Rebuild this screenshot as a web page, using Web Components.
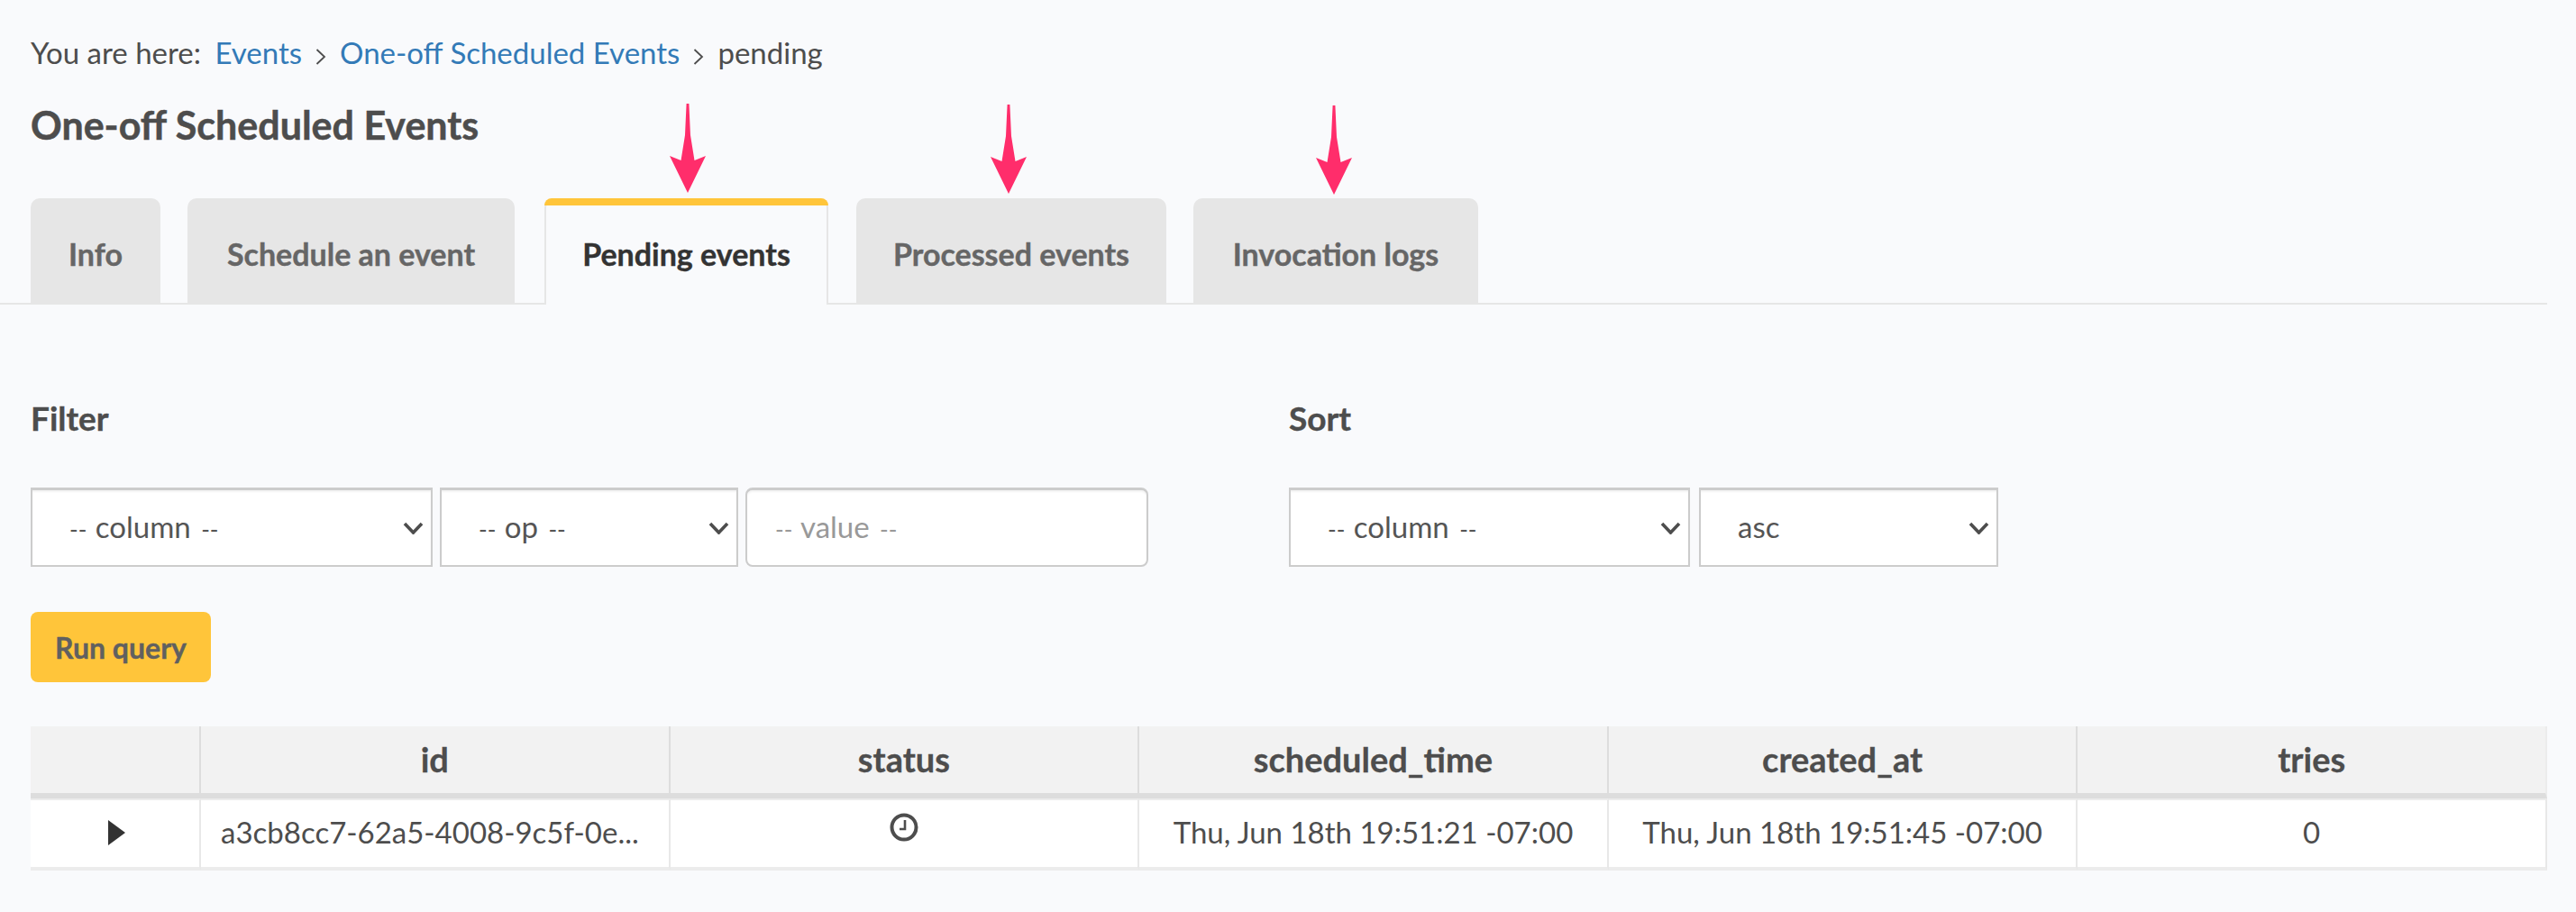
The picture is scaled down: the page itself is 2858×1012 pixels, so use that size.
<!DOCTYPE html>
<html><head><meta charset="utf-8"><title>One-off Scheduled Events</title>
<style>
html,body{margin:0;padding:0;background:#f9fafc;}
body{font-family:"Lato","Noto Sans",sans-serif;color:#4d4d4d;width:2858px;height:1012px;overflow:hidden;}
</style></head><body>
<x-page>
  <x-breadcrumb></x-breadcrumb>
  <x-title>One-off Scheduled Events</x-title>
  <x-tabs>
    <x-tab style="width:144px">Info</x-tab>
    <x-tab style="width:363px">Schedule an event</x-tab>
    <x-tab active arrow style="width:315px;margin-left:3px;--ax:1px">Pending events</x-tab>
    <x-tab arrow style="width:344px;margin-left:1px;--ax:-3px;--ay:1px">Processed events</x-tab>
    <x-tab arrow style="width:316px;--ax:-2px;--ay:2px">Invocation logs</x-tab>
  </x-tabs>
  <x-query></x-query>
  <x-table></x-table>
</x-page>
<script>
function def(name, html, init){
  customElements.define(name, class extends HTMLElement{
    constructor(){super();this.attachShadow({mode:'open'}).innerHTML=html;}
    connectedCallback(){ if(init) init(this); }
  });
}
const CH='<svg width="23" height="14" viewBox="0 0 23 14"><path d="M2 2 L11.5 12 L21 2" fill="none" stroke="#4d4d4d" stroke-width="3.6"/></svg>';
const SEP='<svg class="s" width="12" height="18" viewBox="0 0 12 18"><path d="M1.5 1 L10 9 L1.5 17" fill="none" stroke="#4d4d4d" stroke-width="1.8"/></svg>';
def('x-page',`<style>:host{display:block;padding-top:43px}</style><slot></slot>`);
def('x-breadcrumb',`<style>:host{display:block;margin-left:34px;font-size:33px;line-height:30px;height:30px;color:#4d4d4d;white-space:nowrap}
 a{color:#337ab7;text-decoration:none}
 a.f{margin-left:7px}
 .s{margin:0 15px;vertical-align:-1px}</style>You are here: <a class="f" href="#">Events</a>${SEP}<a href="#">One-off Scheduled Events</a>${SEP}pending`);
def('x-title',`<style>:host{display:block;margin:45px 0 0 34px;font-size:43px;font-weight:700;-webkit-text-stroke:.5px #4d4d4d;line-height:42px;height:30px;color:#4d4d4d;white-space:nowrap}</style><slot></slot>`);
def('x-tabs',`<style>:host{display:flex;gap:30px;margin-top:72px;padding-left:34px;width:2826px;border-bottom:2px solid #e6e6e6;box-sizing:border-box;height:118px}</style><slot></slot>`);
def('x-tab',`<style>:host{display:block;position:relative;height:116px;box-sizing:border-box;background:#e6e6e6;border-radius:10px 10px 0 0;color:#666;font-size:34px;font-weight:700;-webkit-text-stroke:.4px currentColor;line-height:124px;text-align:center;white-space:nowrap}
 :host([active]){background:#f9fafc;color:#333;height:118px;border:solid #e6e6e6;border-width:0 2px;}
 .bar{display:none;position:absolute;left:-2px;right:-2px;top:0;height:8px;background:#ffc53a;border-radius:10px 10px 0 0}
 :host([active]) .bar{display:block}
 svg{display:none;position:absolute;left:50%;top:calc(-105px + var(--ay,0px));margin-left:calc(-21px + var(--ax,0px))}
 :host([arrow]) svg{display:block}</style>
 <span class="bar"></span><slot></slot>
 <svg width="42" height="100" viewBox="0 0 42 100"><path d="M19.6 0 H22.4 L24 35 L28.5 63 L41 58 L21 99 L1 58 L13.5 63 L18 35 Z" fill="#ff2d6b"/></svg>`);
def('x-control',`<style>:host{display:flex;align-items:center;box-sizing:border-box;height:88px;border:2px solid #ccc;border-top-width:3px;background:#fff;padding:0 8px 3px 41px;font-size:33px;color:#555;white-space:nowrap;box-shadow:inset 0 2px 2px rgba(0,0,0,.05)}
 :host([input]){border-radius:8px;color:#999;padding-left:31px}
 .t{flex:1}
 #c{display:flex;margin-top:3px}</style><span class="t"><slot></slot></span><span id="c"></span>`,
 el=>{ if(!el.hasAttribute('input')) el.shadowRoot.getElementById('c').innerHTML=CH; });
def('x-button',`<style>:host{display:inline-flex;align-items:center;justify-content:center;box-sizing:border-box;width:200px;height:78px;background:#ffc53a;border-radius:8px;color:#606060;font-size:32px;font-weight:700;-webkit-text-stroke:.4px #606060}</style><slot></slot>`);
def('x-query',`<style>:host{display:block;padding-top:113px}
 .g{display:flex;padding-left:34px}
 .f{width:1396px}
 h4{margin:0;font-size:37px;line-height:26px;height:30px;color:#4d4d4d;font-weight:700;-webkit-text-stroke:.4px #4d4d4d}
 .r{display:flex;gap:8px;margin-top:60px}
 x-button{margin:50px 0 0 34px}
 .a,.b{font-size:26px}
 .a{margin-right:1px}.b{margin-left:3px}
</style>
<div class="g"><div class="f"><h4>Filter</h4><div class="r">
<x-control style="width:446px"><span class="a">--</span> column <span class="b">--</span></x-control><x-control style="width:331px"><span class="a">--</span> op <span class="b">--</span></x-control><x-control input style="width:447px"><span class="a">--</span> value <span class="b">--</span></x-control></div></div>
<div class="s"><h4>Sort</h4><div class="r" style="gap:10px"><x-control style="width:445px"><span class="a">--</span> column <span class="b">--</span></x-control><x-control style="width:332px">asc</x-control></div></div></div>
<x-button>Run query</x-button>`);
def('x-table',`<style>:host{display:grid;grid-template-columns:189px repeat(5,1fr);margin:49px 0 0 34px;width:2792px;font-size:33px;color:#4d4d4d}
 .h{height:72px;background:#f2f2f2;border-right:2px solid #ddd;border-bottom:6px solid #ddd;padding-bottom:2px;display:flex;align-items:center;justify-content:center;font-weight:700;font-size:38px;-webkit-text-stroke:.3px #4d4d4d}
 .h.e{border-right-color:#ececec}
 .d{box-sizing:border-box;height:80px;padding-bottom:5px;background:#fff;border-top:2px solid #ececec;border-right:2px solid #e8e8e8;border-bottom:4px solid #ececec;display:flex;align-items:center;justify-content:center;white-space:nowrap}
 .d.l{justify-content:flex-start;padding-left:22px}
</style>
<div class="h"></div><div class="h">id</div><div class="h">status</div><div class="h">scheduled_time</div><div class="h">created_at</div><div class="h e">tries</div>
<div class="d" style="padding-bottom:3px"><svg style="margin-left:4px" width="20" height="28" viewBox="0 0 20 28"><path d="M0 0 L19 14 L0 28 Z" fill="#333"/></svg></div>
<div class="d l">a3cb8cc7-62a5-4008-9c5f-0e...</div>
<div class="d" style="padding-bottom:3px"><svg style="margin:0 0 11px 0" width="32" height="32" viewBox="0 0 32 32"><circle cx="16" cy="16" r="13.5" fill="none" stroke="#4d4d4d" stroke-width="4"/><path d="M17 8 V18 H11" fill="none" stroke="#4d4d4d" stroke-width="2.6"/></svg></div>
<div class="d">Thu, Jun 18th 19:51:21 -07:00</div>
<div class="d">Thu, Jun 18th 19:51:45 -07:00</div>
<div class="d">0</div>`);
</script>
</body></html>
